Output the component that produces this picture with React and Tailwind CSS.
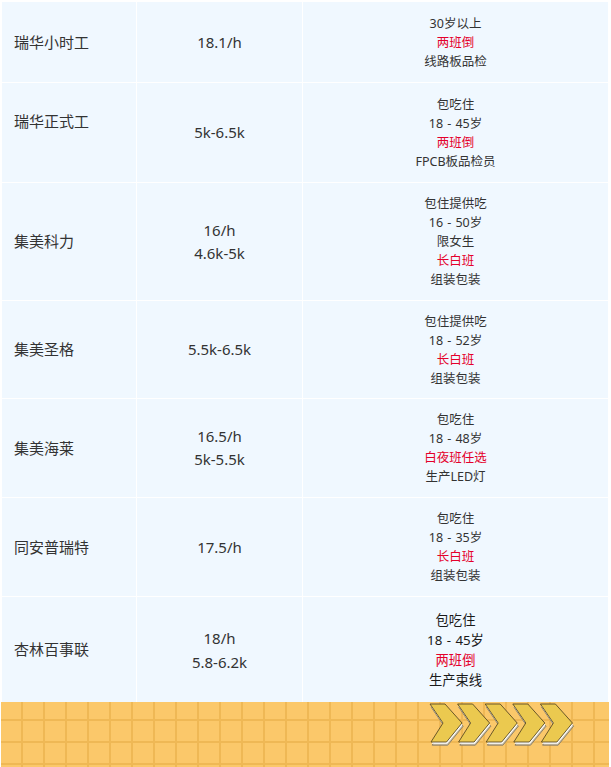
import React from "react";

const rows = [
  { name: "瑞华小时工", pay: ["18.1/h"], info: [["30岁以上"], ["两班倒", 1], ["线路板品检"]], h: "h-[80px]" },
  { name: "瑞华正式工", pay: ["5k-6.5k"], info: [["包吃住"], ["18\u2004-\u200445岁"], ["两班倒", 1], ["FPCB板品检员"]], h: "h-[99px]", up: true },
  { name: "集美科力", pay: ["16/h", "4.6k-5k"], info: [["包住提供吃"], ["16\u2004-\u200450岁"], ["限女生"], ["长白班", 1], ["组装包装"]], h: "h-[117px]" },
  { name: "集美圣格", pay: ["5.5k-6.5k"], info: [["包住提供吃"], ["18\u2004-\u200452岁"], ["长白班", 1], ["组装包装"]], h: "h-[97px]" },
  { name: "集美海莱", pay: ["16.5/h", "5k-5.5k"], info: [["包吃住"], ["18\u2004-\u200448岁"], ["白夜班任选", 1], ["生产LED灯"]], h: "h-[98px]" },
  { name: "同安普瑞特", pay: ["17.5/h"], info: [["包吃住"], ["18\u2004-\u200435岁"], ["长白班", 1], ["组装包装"]], h: "h-[98px]" },
  { name: "杏林百事联", pay: ["18/h", "5.8-6.2k"], info: [["包吃住"], ["18\u2004-\u200445岁"], ["两班倒", 1], ["生产束线"]], h: "h-[105px]", big: true },
];

const CHEV = "M1 2 L16 2 L33 21 L17.5 40 L2 40 L14 21 Z";

function Chevrons() {
  return (
    <svg width="150" height="48" viewBox="0 0 150 48">
      {[0, 1, 2, 3, 4].map((i) => (
        <g key={i} transform={`translate(${i * 27.6} 0)`}>
          <path d={CHEV} transform="translate(1.2 3.2)" fill="#c9c0a8" stroke="#7a7060" strokeWidth="0.8" />
          <path d={CHEV} transform="translate(0.6 1.8)" fill="#ffffff" />
          <path d={CHEV} fill="#ebc94f" stroke="#5a4b22" strokeWidth="0.9" strokeLinejoin="round" />
        </g>
      ))}
    </svg>
  );
}

export default function App() {
  return (
    <div className="w-[611px] h-[767px] bg-white overflow-hidden font-['Noto_Sans','Noto_Sans_CJK_SC',sans-serif]">
      <div className="pt-[2px] pl-[2px] pr-[3px] flex flex-col gap-[1px]">
        {rows.map((r, idx) => (
          <div key={idx} className={`grid grid-cols-[134px_165px_1fr] gap-x-[1px] ${r.h}`}>
            <div className={`bg-[#f0f8ff] flex items-center pl-[12px] text-[15px] text-[#333] ${r.up ? "pb-[22px]" : ""}`}>
              {r.name}
            </div>
            <div className={`bg-[#f0f8ff] flex flex-col items-center justify-center text-[15px] text-[#333] ${r.big ? "leading-[24px]" : "leading-[23px]"}`}>
              {r.pay.map((p, j) => (
                <div key={j}>{p}</div>
              ))}
            </div>
            <div
              className={`bg-[#f0f8ff] flex flex-col items-center justify-center ${
                r.big ? "text-[13.3px] leading-[20px] text-[#1a1a1a]" : "text-[12.5px] leading-[19px] text-[#333]"
              }`}
            >
              {r.info.map(([t, red], j) => (
                <div key={j} className={red ? "text-[#e4002b]" : ""}>
                  {t}
                </div>
              ))}
            </div>
          </div>
        ))}
      </div>
      <div className="ml-[1px] w-[608px] h-[65px] bg-[#fbc86a] bg-[linear-gradient(to_right,#efb855_2px,transparent_2px),linear-gradient(to_bottom,#efb855_2px,transparent_2px)] bg-[length:22px_22px] bg-[position:20px_17px] flex items-start">
        <div className="ml-[428px] mt-[0px]">
          <Chevrons />
        </div>
      </div>
    </div>
  );
}
